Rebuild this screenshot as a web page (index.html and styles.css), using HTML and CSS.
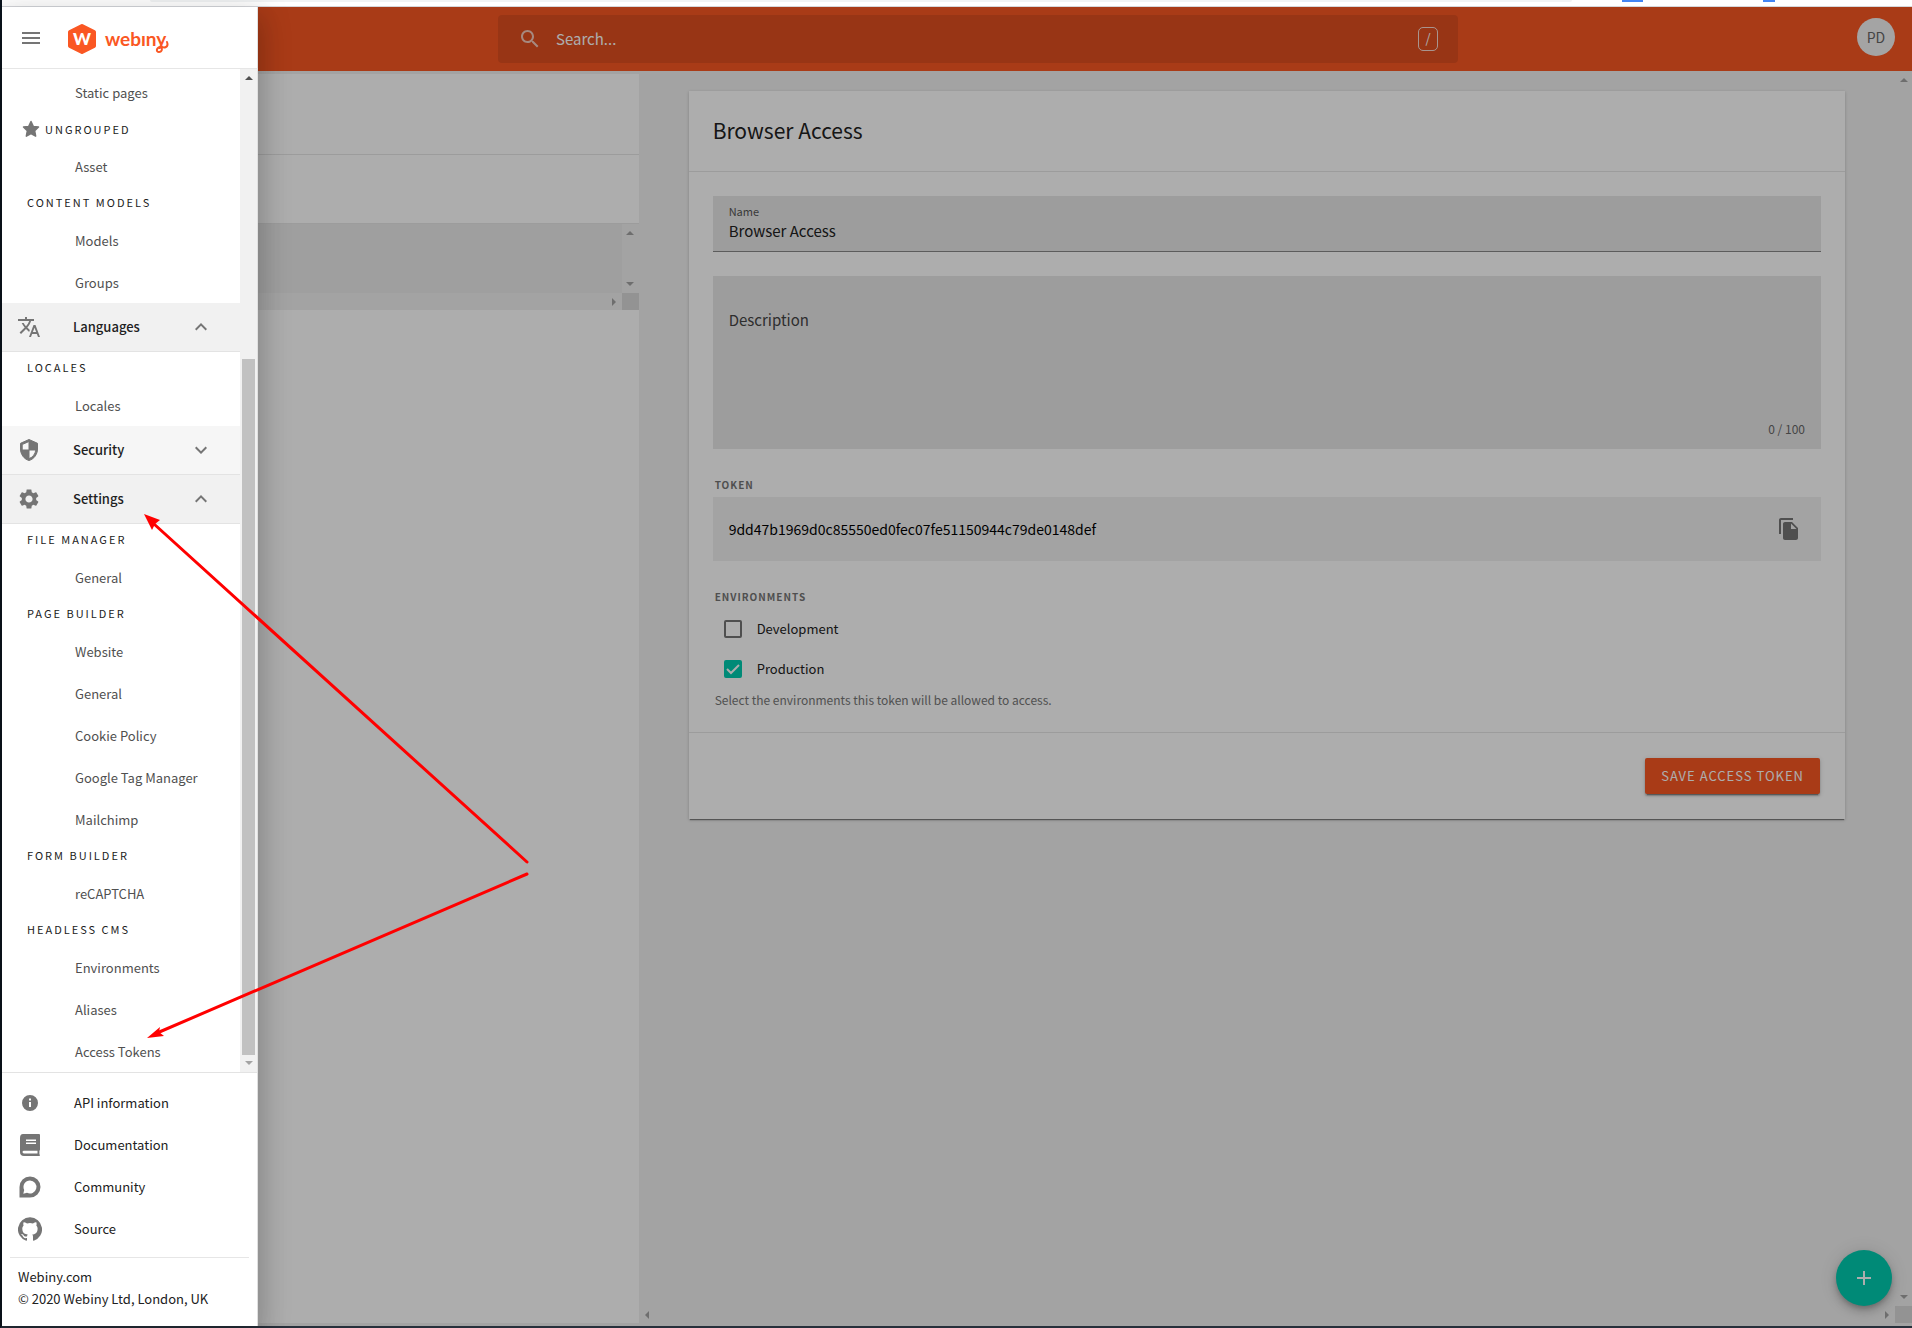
FILE: index.html
```html
<!DOCTYPE html>
<html lang="en">
<head>
<meta charset="utf-8">
<title>Webiny - Access Tokens</title>
<link rel="stylesheet" href="styles.css">
</head>
<body>
<div class="window">
  <div class="browser-edge"><span class="address"></span><span class="blip"></span><span class="blip small"></span></div>
  <div class="workspace">
    <div class="app">
      <header class="topbar">
        <div class="search">
          <svg class="icon" viewBox="0 0 24 24"><path d="M15.5 14h-.79l-.28-.27C15.41 12.59 16 11.11 16 9.500 16 5.910 13.090 3 9.500 3S3 5.910 3 9.500 5.910 16 9.500 16c1.610 0 3.090-.59 4.230-1.570l.27.28v.79l5 4.990L20.490 19l-4.990-5zm-6 0C7.010 14 5 11.990 5 9.500S7.010 5 9.500 5 14 7.010 14 9.500 11.990 14 9.500 14z"/></svg>
          <input type="text" placeholder="Search..." aria-label="Search">
          <kbd>/</kbd>
        </div>
        <button class="avatar" type="button">PD</button>
      </header>
      <div class="columns">
        <aside class="list-panel">
          <div class="list-title"></div>
          <div class="list-tools"></div>
          <div class="list-box">
            <div class="list-rows"></div>
            <div class="track vertical"><i class="arrow up"></i><i class="arrow down"></i></div>
            <div class="track horizontal end"><i class="arrow right"></i></div>
            <div class="corner"></div>
          </div>
        </aside>
        <main class="content">
          <div class="canvas">
            <form class="card">
              <h1>Browser Access</h1>
              <div class="card-body">
                <div class="field">
                  <label for="name">Name</label>
                  <input id="name" type="text" value="Browser Access">
                </div>
                <div class="field area">
                  <label for="description">Description</label>
                  <textarea id="description"></textarea>
                  <span class="counter">0 / 100</span>
                </div>
                <section class="group">
                  <h2>TOKEN</h2>
                  <div class="token">
                    <span>9dd47b1969d0c85550ed0fec07fe51150944c79de0148def</span>
                    <button class="icon-button" type="button" aria-label="Copy"><svg class="icon" viewBox="0 0 24 24"><path d="M16 1H4c-1.100 0-2 .9-2 2v14h2V3h12V1zm-1 4l6 6v10c0 1.100-.9 2-2 2H7.990C6.890 23 6 22.100 6 21l.01-14c0-1.100.89-2 1.990-2h7zm-1 7h5.500L14 6.500V12z"/></svg></button>
                  </div>
                </section>
                <section class="group">
                  <h2>ENVIRONMENTS</h2>
                  <label class="check"><input type="checkbox">Development</label>
                  <label class="check"><input type="checkbox" checked>Production</label>
                  <p class="hint">Select the environments this token will be allowed to access.</p>
                </section>
              </div>
              <footer class="card-actions"><button class="save" type="button">SAVE ACCESS TOKEN</button></footer>
            </form>
          </div>
          <div class="track vertical"><i class="arrow up"></i><i class="arrow down"></i></div>
          <div class="track horizontal"><i class="arrow left"></i><i class="arrow right"></i></div>
          <div class="corner"></div>
          <button class="fab" type="button" aria-label="Add"><svg class="icon" viewBox="0 0 24 24"><path d="M19 13h-6v6h-2v-6H5v-2h6V5h2v6h6v2z"/></svg></button>
        </main>
      </div>
    </div>
    <div class="scrim"></div>
    <div class="drawer">
      <div class="drawer-head">
        <button class="icon-button" type="button" aria-label="Menu"><svg class="icon" viewBox="0 0 24 24"><path d="M3 18h18v-2H3v2zm0-5h18v-2H3v2zm0-7v2h18V6H3z"/></svg></button>
        <a class="logo" href="#" aria-label="Webiny">
          <svg viewBox="0 0 100 34">
            <path d="M14 5L26 11V25L14 31L2 25V11Z" fill="#fa5723" stroke="#fa5723" stroke-width="4" stroke-linejoin="round"/>
            <text class="logo-mark" x="14" y="24" text-anchor="middle">W</text>
            <text class="logo-name" x="37" y="25">webıny</text>
            <path d="M92 26C88 27 88 31 91 31S95 27 93 25C96 28 101 26 99 21" fill="none" stroke="#fa5723" stroke-width="2" stroke-linecap="round"/>
          </svg>
        </a>
      </div>
      <div class="drawer-scroll">
        <nav class="menu">
          <a href="#">Static pages</a>
          <h3 class="with-icon"><svg class="icon" viewBox="0 0 24 24"><path stroke="currentColor" stroke-width="2" stroke-linejoin="round" d="M12 2l3 6.500 7 .9-5.100 5 1.300 7.100L12 18l-6.200 3.500 1.300-7.100L2 9.400l7-.9z"/></svg>UNGROUPED</h3>
          <a href="#">Asset</a>
          <h3>CONTENT MODELS</h3>
          <a href="#">Models</a>
          <a href="#">Groups</a>
          <button class="section open" type="button">
            <svg class="icon" viewBox="0 0 24 24"><path d="M12.870 15.070l-2.540-2.510.03-.03c1.740-1.940 2.980-4.170 3.710-6.530H17V4h-7V2H8v2H1v1.990h11.170C11.500 7.920 10.440 9.750 9 11.350 8.070 10.320 7.300 9.190 6.690 8h-2c.73 1.630 1.730 3.170 2.980 4.560l-5.090 5.020L4 19l5-5 3.110 3.110.76-2.040zM18.500 10h-2L12 22h2l1.120-3h4.750L21 22h2l-4.500-12zm-2.620 7l1.620-4.330L19.120 17h-3.240z"/></svg>
            <span>Languages</span>
            <svg class="icon" viewBox="0 0 24 24"><path d="M12 8l-6 6 1.410 1.410L12 10.830l4.590 4.580L18 14z"/></svg>
          </button>
          <h3>LOCALES</h3>
          <a href="#">Locales</a>
          <button class="section" type="button">
            <svg class="icon" viewBox="0 0 24 24"><path stroke="currentColor" stroke-width="1" stroke-linejoin="round" d="M12 1.500L3.500 5.300V11c0 5.300 3.600 10.200 8.500 11.500 4.900-1.300 8.500-6.200 8.500-11.500V5.300zM12 12h6.800c-.5 4-3.200 7.500-6.800 8.600V12H5.200V6.500L12 3.500z" fill-rule="evenodd"/></svg>
            <span>Security</span>
            <svg class="icon" viewBox="0 0 24 24"><path d="M16.590 8.590L12 13.170 7.410 8.590 6 10l6 6 6-6z"/></svg>
          </button>
          <button class="section open" type="button">
            <svg class="icon" viewBox="0 0 24 24"><path d="M19.140 12.940c.04-.3.060-.61.060-.94 0-.32-.02-.64-.07-.94l2.030-1.580c.18-.14.23-.41.12-.61l-1.920-3.320c-.12-.22-.37-.29-.59-.22l-2.390.96c-.5-.38-1.030-.7-1.620-.94l-.36-2.540c-.04-.24-.24-.41-.48-.41h-3.840c-.24 0-.43.17-.47.41l-.36 2.540c-.59.24-1.130.57-1.620.94l-2.390-.96c-.22-.08-.47 0-.59.22L2.740 8.870c-.12.21-.08.47.12.61l2.030 1.580c-.05.3-.09.63-.09.94s.02.64.07.94l-2.030 1.580c-.18.14-.23.41-.12.61l1.920 3.320c.12.22.37.29.59.22l2.390-.96c.5.38 1.030.7 1.620.94l.36 2.540c.05.24.24.41.48.41h3.840c.24 0 .44-.17.47-.41l.36-2.540c.59-.24 1.130-.56 1.620-.94l2.390.96c.22.08.47 0 .59-.22l1.920-3.320c.12-.22.07-.47-.12-.61l-2.010-1.580zM12 15.600c-1.980 0-3.600-1.620-3.600-3.600s1.620-3.600 3.600-3.600 3.600 1.620 3.600 3.600-1.620 3.600-3.600 3.600z"/></svg>
            <span>Settings</span>
            <svg class="icon" viewBox="0 0 24 24"><path d="M12 8l-6 6 1.410 1.410L12 10.830l4.590 4.580L18 14z"/></svg>
          </button>
          <h3>FILE MANAGER</h3>
          <a href="#">General</a>
          <h3>PAGE BUILDER</h3>
          <a href="#">Website</a>
          <a href="#">General</a>
          <a href="#">Cookie Policy</a>
          <a href="#">Google Tag Manager</a>
          <a href="#">Mailchimp</a>
          <h3>FORM BUILDER</h3>
          <a href="#">reCAPTCHA</a>
          <h3>HEADLESS CMS</h3>
          <a href="#">Environments</a>
          <a href="#">Aliases</a>
          <a href="#">Access Tokens</a>
        </nav>
        <div class="scrollbar"><i class="arrow up dark"></i><span class="thumb"></span><i class="arrow down"></i></div>
      </div>
      <div class="drawer-foot">
        <a href="#"><svg class="icon" viewBox="0 0 24 24"><path d="M12 4a8 8 0 100 16 8 8 0 000-16zm1 12h-2v-5h2zm0-6.500h-2v-2h2z"/></svg>API information</a>
        <a href="#"><svg class="icon" viewBox="0 0 24 24"><path fill-rule="evenodd" d="M5 1h16q1 0 1 1v14.500q0 1-.6 1.200v3.600q.6.300.6 1 0 .7-1 .7H6q-4 0-4-4V5q0-4 3-4zM8 6.500v1.500h10V6.500zM8 9.500v1.500h10V9.500zM6 17.800q-1.500 0-1.500 1.300T6 20.400h13.500v-2.600z"/></svg>Documentation</a>
        <a href="#"><svg class="icon" viewBox="0 0 24 24"><path fill-rule="evenodd" d="M12 1.500A10.500 10.500 0 0122.500 12 10.500 10.500 0 0112 22.500H1.500V12A10.500 10.500 0 0112 1.500zM12 5.500A6.500 6.500 0 006.200 15L5.300 18.700 9 17.800A6.500 6.500 0 1012 5.500z"/></svg>Community</a>
        <a href="#"><svg class="icon" viewBox="0 0 24 24"><path d="M12 .3a12 12 0 00-3.800 23.400c.6.100.8-.3.800-.6v-2c-3.300.7-4-1.600-4-1.600-.6-1.400-1.400-1.800-1.400-1.800-1-.7.100-.7.100-.7 1.200 0 1.900 1.200 1.900 1.200 1 1.800 2.800 1.300 3.500 1 0-.8.400-1.300.7-1.600-2.700-.3-5.500-1.300-5.500-6 0-1.200.5-2.300 1.300-3.100-.2-.4-.6-1.600 0-3.200 0 0 1-.3 3.400 1.200a11.500 11.500 0 016 0c2.300-1.500 3.300-1.200 3.300-1.200.6 1.600.2 2.800 0 3.200.9.800 1.300 1.900 1.300 3.200 0 4.600-2.800 5.600-5.500 5.900.5.400.9 1 .9 2.200v3.300c0 .3.100.7.800.6A12 12 0 0012 .3"/></svg>Source</a>
        <div class="legal"><a href="#">Webiny.com</a><p>© 2020 Webiny Ltd, London, UK</p></div>
      </div>
    </div>
    <svg class="pointers" viewBox="0 0 400 540">
      <path d="M385 351L12 13M385 363L15 522" fill="none" stroke="#f00" stroke-width="3" stroke-linecap="round"/>
      <path d="M2 3L18 9L13 13L10 19ZM5 527L18 516L17 521L22 525Z" fill="#f00"/>
    </svg>
  </div>
</div>
</body>
</html>
```
FILE: styles.css
```css
* { box-sizing: border-box; margin: 0; }

body {
  font-family: "Noto Sans CJK SC", "Noto Sans", sans-serif;
  font-size: 13px;
  line-height: 20px;
  color: #212121;
}

a { color: inherit; text-decoration: none; }
button, input, textarea { font: inherit; color: inherit; border: 0; padding: 0; background: none; outline: 0; }

.icon { display: block; flex: none; width: 24px; height: 24px; fill: currentColor; }

.window {
  min-height: 100vh;
  display: flex;
  flex-direction: column;
  border-left: 2px solid #0b141d;
  border-bottom: 2px solid #27303b;
}

.browser-edge {
  height: 7px;
  display: flex;
  align-items: flex-start;
  padding-left: 148px;
  padding-right: 137px;
  background: #fff;
  border-bottom: 1px solid #d5d7db;
}
.address { flex: 1; height: 2px; background: #f1f3f4; border-radius: 0 0 4px 4px; }
.blip { width: 21px; height: 2px; margin-left: 50px; background: #4285f4; }
.blip.small { width: 12px; margin-left: 120px; }

/* The app, the scrim and the drawer share one grid cell, stacked in order. */
.workspace { flex: 1; display: grid; position: relative; }
.app, .scrim, .drawer { grid-area: 1 / 1; }
.scrim { background: rgba(0, 0, 0, 0.32); z-index: 1; }

.app { display: flex; flex-direction: column; min-width: 0; background: #f0f0f0; }

.topbar {
  height: 64px;
  display: grid;
  grid-template-columns: minmax(0, 1fr) minmax(0, 960px) minmax(0, 1fr);
  align-items: center;
  padding: 0 17px 0 59px;
  background: #fa5723;
}
.search {
  grid-column: 2;
  height: 48px;
  display: flex;
  align-items: center;
  gap: 14px;
  padding: 0 20px;
  border-radius: 4px;
  background: rgba(0, 0, 0, 0.1);
  color: #fff;
}
.search .icon { opacity: 0.7; }
.search input { flex: 1; min-width: 0; font-size: 15px; }
.search input::placeholder { color: #fff; opacity: 1; }
.search kbd {
  width: 20px;
  height: 24px;
  border: 1px solid rgba(255, 255, 255, 0.8);
  border-radius: 5px;
  font: inherit;
  text-align: center;
}
.avatar {
  justify-self: end;
  width: 38px;
  height: 38px;
  margin-bottom: 4px;
  border-radius: 50%;
  background: #f2f2f2;
  color: #666;
  font-size: 14px;
}

.columns { flex: 1; display: grid; grid-template-columns: 1fr 2fr; padding-bottom: 3px; }

.list-panel { margin-top: 3px; background: #fff; }
.list-title { height: 81px; border-bottom: 1px solid #e6e6e6; }
.list-tools { height: 69px; border-bottom: 1px solid #e6e6e6; }
.list-box { display: grid; grid-template-columns: 1fr 17px; grid-template-rows: 69px 17px; }
.list-rows { background: #ebebeb; }

.track { display: flex; justify-content: space-between; align-items: center; background: #f1f1f1; }
.track.vertical { flex-direction: column; padding: 7px 0; }
.track.horizontal { padding: 0 6px; }
.track.end { justify-content: flex-end; }
.corner { background: #d9d9d9; }

.arrow { width: 0; height: 0; border: 4px solid transparent; color: #a3a3a3; }
.arrow.dark { color: #505050; }
.arrow.up { border-top: 0; border-bottom-color: currentColor; }
.arrow.down { border-bottom: 0; border-top-color: currentColor; }
.arrow.left { border-left: 0; border-right-color: currentColor; }
.arrow.right { border-right: 0; border-left-color: currentColor; }

.content {
  position: relative;
  min-width: 0;
  display: grid;
  grid-template-columns: 1fr 17px;
  grid-template-rows: 1fr 17px;
}
.canvas { padding: 20px 50px; }
.content .track { background: none; }

.card {
  background: #fff;
  box-shadow: 0 2px 1px -1px rgba(0, 0, 0, 0.4), 0 1px 3px rgba(0, 0, 0, 0.2);
}
.card h1 {
  height: 81px;
  padding: 0 24px;
  border-bottom: 1px solid #e6e6e6;
  font-size: 21px;
  font-weight: 400;
  line-height: 78px;
}
.card-body { display: flex; flex-direction: column; gap: 24px; padding: 24px 24px 21px; }

.field {
  height: 56px;
  display: flex;
  flex-direction: column;
  padding: 7px 16px;
  background: #e8e8e8;
  border-bottom: 1px solid #888;
}
.field label { font-size: 11px; line-height: 16px; color: #555; }
.field input { width: 100%; height: 22px; font-size: 15px; }
.field.area { height: 173px; padding: 33px 16px 10px; border-bottom: 0; }
.field.area label { font-size: 15px; line-height: 22px; color: #444; }
.field textarea { flex: 1; min-height: 0; resize: none; }
.counter { align-self: flex-end; font-size: 12px; line-height: 20px; color: #666; }

.group h2 { padding: 2px; font-size: 10px; line-height: 20px; color: #757575; letter-spacing: 1px; }
.token {
  height: 64px;
  display: flex;
  align-items: center;
  justify-content: space-between;
  padding: 0 20px 0 16px;
  background: #f1f1f1;
  font-size: 14px;
  color: #000;
}
.icon-button { color: #757575; }

.check { display: flex; align-items: center; gap: 15px; height: 40px; padding-left: 11px; }
.check input {
  appearance: none;
  width: 18px;
  height: 18px;
  border: 2px solid #757575;
  border-radius: 2px;
}
.check input:checked {
  border-color: #00ccb0;
  background: #00ccb0 url("data:image/svg+xml,%3Csvg xmlns='http://www.w3.org/2000/svg' viewBox='0 0 14 14'%3E%3Cpath d='M1 7l4 4 8-8' fill='none' stroke='white' stroke-width='2'/%3E%3C/svg%3E") center / 14px 14px no-repeat;
}
.hint { padding-left: 2px; font-size: 12px; line-height: 22px; color: #777; }

.card-actions {
  display: flex;
  justify-content: flex-end;
  padding: 25px;
  border-top: 1px solid #e6e6e6;
}
.save {
  height: 36px;
  padding: 0 16px;
  border-radius: 2px;
  background: #fa5723;
  color: #fff;
  letter-spacing: 1px;
  box-shadow: 0 3px 1px -2px rgba(0, 0, 0, 0.3), 0 2px 2px rgba(0, 0, 0, 0.2), 0 1px 5px rgba(0, 0, 0, 0.15);
}

.fab {
  position: absolute;
  right: 20px;
  bottom: 17px;
  width: 56px;
  height: 56px;
  display: grid;
  place-items: center;
  border-radius: 50%;
  background: #00ccb0;
  color: #fff;
  box-shadow: 0 3px 5px -1px rgba(0, 0, 0, 0.2), 0 6px 10px rgba(0, 0, 0, 0.14), 0 1px 18px rgba(0, 0, 0, 0.12);
}

.drawer {
  z-index: 2;
  justify-self: start;
  width: 256px;
  display: flex;
  flex-direction: column;
  background: #fff;
  border-right: 1px solid #e0e0e0;
  box-shadow: 0 16px 24px 2px rgba(0, 0, 0, 0.14), 0 6px 30px 5px rgba(0, 0, 0, 0.12);
}
.drawer-head {
  height: 62px;
  display: flex;
  align-items: center;
  gap: 25px;
  padding-left: 17px;
  border-bottom: 1px solid #e6e6e6;
}
.logo svg { display: block; width: 100px; height: 34px; overflow: visible; }
.logo-mark { font: 900 17px Lato, sans-serif; fill: #fff; }
.logo-name { font: 700 19px Lato, sans-serif; fill: #fa5723; }

.drawer-scroll { flex: none; display: flex; }
.menu { flex: 1; display: flex; flex-direction: column; padding-top: 2px; }
.menu a { height: 42px; padding-left: 73px; line-height: 44px; color: #505050; }
.menu h3 {
  height: 32px;
  padding-left: 25px;
  font-size: 11px;
  font-weight: 400;
  line-height: 30px;
  letter-spacing: 2px;
}
.menu .with-icon { display: flex; align-items: center; gap: 5px; padding-left: 20px; }
.with-icon .icon { width: 18px; height: 18px; color: #757575; }
.section {
  height: 49px;
  display: flex;
  align-items: center;
  padding: 0 27px 0 15px;
  border-bottom: 1px solid #e3e3e3;
  background: #f6f6f6;
  text-align: left;
}
.section.open { background: #f1f1f1; }
.section .icon { color: #757575; }
.section span { flex: 1; padding-left: 32px; font-weight: 500; }

.scrollbar {
  width: 17px;
  display: flex;
  flex-direction: column;
  align-items: center;
  gap: 6px;
  padding: 7px 0;
  background: #f1f1f1;
}
.scrollbar .thumb { width: 13px; height: 696px; margin-top: auto; background: #c1c1c1; }

.drawer-foot { flex: 1; padding-top: 9px; border-top: 1px solid #e3e3e3; }
.drawer-foot > a { height: 42px; display: flex; align-items: center; gap: 32px; padding-left: 16px; }
.drawer-foot .icon { color: #757575; }
.legal { margin: 7px 8px 0; padding: 8px 8px 0; border-top: 1px solid #e6e6e6; line-height: 22px; }
.legal a { display: block; }

/* Annotation arrows drawn over the whole page. */
.pointers { position: absolute; z-index: 3; left: 140px; top: 504px; width: 400px; height: 540px; pointer-events: none; }
```
